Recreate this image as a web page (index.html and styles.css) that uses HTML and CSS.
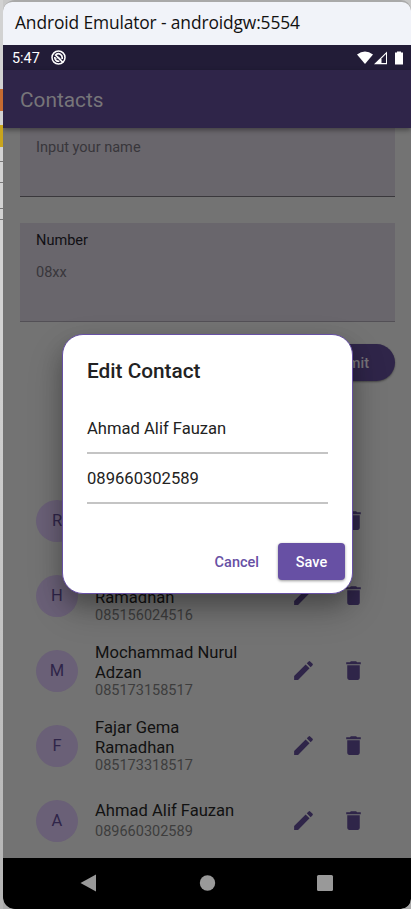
FILE: index.html
```html
<!DOCTYPE html>
<html lang="en">
<head>
<meta charset="utf-8">
<title>Contacts</title>
<link rel="stylesheet" href="styles.css">
</head>
<body>
<svg width="0" height="0" class="defs">
  <symbol id="edit" viewBox="0 0 24 24"><path d="M3 17.25V21h3.75L17.81 9.94l-3.75-3.75L3 17.25zM20.71 7.04a1 1 0 0 0 0-1.41l-2.34-2.34a1 1 0 0 0-1.41 0l-1.83 1.83 3.75 3.75 1.83-1.83z"/></symbol>
  <symbol id="trash" viewBox="0 0 24 24"><path d="M6 19c0 1.100.9 2 2 2h8c1.100 0 2-.9 2-2V7H6v12zM19 4h-3.500l-1-1h-5l-1 1H5v2h14V4z"/></symbol>
</svg>
<div class="desktop-edge"><i class="orange"></i><i class="yellow"></i><i class="line l1"></i><i class="line l2"></i><i class="line l3"></i><i class="line l4"></i></div>
<div class="window">
  <header class="titlebar"><span>Android Emulator - androidgw:5554</span></header>
  <div class="status">
    <span class="time">5:47</span>
    <svg class="notif" width="15" height="15" viewBox="0 0 15 15"><circle cx="7.500" cy="7.500" r="6.500" fill="none" stroke="#fff" stroke-width="1.500"/><path d="M4 4.500L12 12.500M5 4.400C8 2.600 11.200 4.500 11.200 7.500V9M3.800 7C3.600 9.800 5.800 11.600 8.300 11.200" fill="none" stroke="#fff" stroke-width="1.700"/><path d="M5.500 8.500l2-1.500 2.500 2.800" fill="none" stroke="#fff" stroke-width="1"/></svg>
    <svg class="signals" width="47" height="14" viewBox="0 0 47 14"><path d="M0 3.500Q8 -2.500 16 3.500L8 13z" fill="#fff"/><path d="M30 .5V13.300H17z" fill="#fff"/><path d="M24.500 7.500L29 3v9h-4.500z" fill="#221c37"/><path d="M38 1.500h2V.5h4v1h2v12h-8z" fill="#fff"/></svg>
  </div>
  <div class="appbar">Contacts</div>
  <main class="content">
    <div class="field name"><span class="hint">Input your name</span></div>
    <div class="field number"><span class="label">Number</span><span class="hint">08xx</span></div>
    <div class="submit-row"><span class="submit">Submit</span></div>
    <ul class="list">
      <li><span class="avatar">R</span><div class="info"></div><svg class="icon"><use href="#edit"/></svg><svg class="icon"><use href="#trash"/></svg></li>
      <li><span class="avatar">H</span><div class="info"><b><br>Ramadhan</b><small>085156024516</small></div><svg class="icon"><use href="#edit"/></svg><svg class="icon"><use href="#trash"/></svg></li>
      <li><span class="avatar">M</span><div class="info"><b>Mochammad Nurul Adzan</b><small>085173158517</small></div><svg class="icon"><use href="#edit"/></svg><svg class="icon"><use href="#trash"/></svg></li>
      <li><span class="avatar">F</span><div class="info"><b>Fajar Gema Ramadhan</b><small>085173318517</small></div><svg class="icon"><use href="#edit"/></svg><svg class="icon"><use href="#trash"/></svg></li>
      <li><span class="avatar">A</span><div class="info single"><b>Ahmad Alif Fauzan</b><small>089660302589</small></div><svg class="icon"><use href="#edit"/></svg><svg class="icon"><use href="#trash"/></svg></li>
    </ul>
  </main>
  <nav class="nav">
    <svg width="408" height="51" viewBox="0 0 408 51" fill="#999"><path d="M77.500 25L93 16.500v17z"/><circle cx="204.500" cy="25" r="7.700"/><rect x="314" y="17" width="16" height="16" rx="1.500"/></svg>
  </nav>
</div>
<div class="dialog">
  <h1>Edit Contact</h1>
  <div class="input">Ahmad Alif Fauzan</div>
  <div class="input">089660302589</div>
  <div class="actions"><span class="cancel">Cancel</span><span class="save">Save</span></div>
</div>
</body>
</html>
```
FILE: styles.css
```css
* { box-sizing: border-box; }
body { margin: 0; width: 411px; height: 909px; overflow: hidden; position: relative; background: linear-gradient(#c8c8c8, #a9a9a9 40%); font-family: Roboto, sans-serif; color: #222; }
.defs { position: absolute; }
.desktop-edge { position: absolute; left: 0; top: 0; width: 3px; height: 909px; background: linear-gradient(#d2d2d2 0 340px, #b4b4b4); }
.desktop-edge i { position: absolute; left: 0; width: 3px; }
.orange { top: 89px; height: 22px; background: #c66b31; }
.yellow { top: 125px; height: 22px; background: #c9a51c; }
.line { height: 1px; background: #777; }
.l1 { top: 161px; } .l2 { top: 182px; } .l3 { top: 208px; } .l4 { top: 219px; }
.window { margin-left: 3px; width: 408px; height: 909px; padding-top: 2px; display: flex; flex-direction: column; border-radius: 12px 10px 10px 12px; overflow: hidden; background: #a9a9a9; }
.titlebar { height: 43px; flex: none; background: #f1f3f9; border-radius: 9px 9px 0 0; padding-left: 12px; font: 17.4px/41px "Open Sans", sans-serif; color: #111; white-space: nowrap; letter-spacing: -.13px; }
.status { height: 25px; flex: none; background: #221c37; display: flex; align-items: center; padding: 0 7px 0 9px; color: #fff; }
.time { font-size: 14.4px; line-height: 25px; width: 39px; padding-top: 1px; }
.signals { margin-left: auto; }
.appbar { height: 58px; flex: none; background: #2f2549; color: #777579; font-size: 20.8px; line-height: 60px; padding-left: 17px; box-shadow: 0 2px 5px rgba(0,0,0,.4); z-index: 1; }
.content { height: 730px; flex: none; background: #737373; padding: 0 16px 0 17px; }
.field { background: #69666c; padding-left: 16px; font-size: 14.55px; display: flex; flex-direction: column; border-bottom: 1px solid #3a383c; }
.name { height: 69px; padding-top: 10px; }
.number { height: 99px; margin-top: 26px; padding-top: 8px; border-bottom-color: #535056; }
.hint { color: #38363b; line-height: 20px; }
.label { color: #111014; line-height: 20px; margin-bottom: 12px; }
.submit-row { display: flex; justify-content: flex-end; margin-top: 22px; }
.submit { width: 100px; height: 37px; border-radius: 19px; background: #2f2549; color: #777579; font-weight: 500; font-size: 14.5px; line-height: 39px; text-align: right; padding-right: 26px; box-shadow: 0 1px 2px rgba(0,0,0,.4); }
.list { list-style: none; margin: 102px 0 0; padding: 0; }
.list li { height: 75px; display: flex; align-items: center; padding-left: 16px; }
.avatar { width: 42px; height: 42px; flex: none; border-radius: 50%; background: #6a6077; color: #2f2549; font-size: 16.5px; line-height: 42px; text-align: center; }
.info { width: 172px; flex: none; margin-left: 17px; padding: 1px 20px 0 0; margin-right: 24px; }
.info b, .info small { display: block; }
.info b { font-size: 16.6px; line-height: 20px; font-weight: 400; color: #111; }
.info small { font-size: 14.5px; line-height: 16px; color: #3d3d3d; padding-bottom: 1px; }
.single b { line-height: 21px; white-space: nowrap; }
.info.single { padding-top: 0; }
.single small { padding-top: 3px; }
.icon { width: 25px; height: 25px; flex: none; fill: #2f2549; margin-right: 25px; }
.nav { height: 51px; background: #000; border-radius: 0 0 10px 10px; overflow: hidden; }
.nav svg { display: block; }
.dialog { position: absolute; z-index: 2; left: 62px; top: 334px; width: 291px; height: 260px; border: 1px solid #6750a4; border-radius: 21px; background: #fff; padding: 20px 7px 13px 24px; display: flex; flex-direction: column; box-shadow: 0 11px 20px rgba(0,0,0,.22), 0 16px 36px rgba(0,0,0,.2); }
.dialog h1 { margin: 0 0 21px; font-size: 20.8px; line-height: 32px; font-weight: 500; }
.input { width: 241px; height: 46px; padding-top: 11px; font-size: 16.6px; line-height: 20px; border-bottom: 2px solid #c4c4c4; margin-bottom: 4px; }
.actions { margin-top: auto; display: flex; justify-content: flex-end; align-items: center; font-size: 14.5px; font-weight: 500; }
.cancel { color: #6750a4; margin-right: 19px; padding-top: 1px; }
.save { width: 67px; height: 37px; border-radius: 4px; background: #6750a4; color: #fff; text-align: center; line-height: 39px; box-shadow: 0 1px 3px rgba(0,0,0,.4); }
```
